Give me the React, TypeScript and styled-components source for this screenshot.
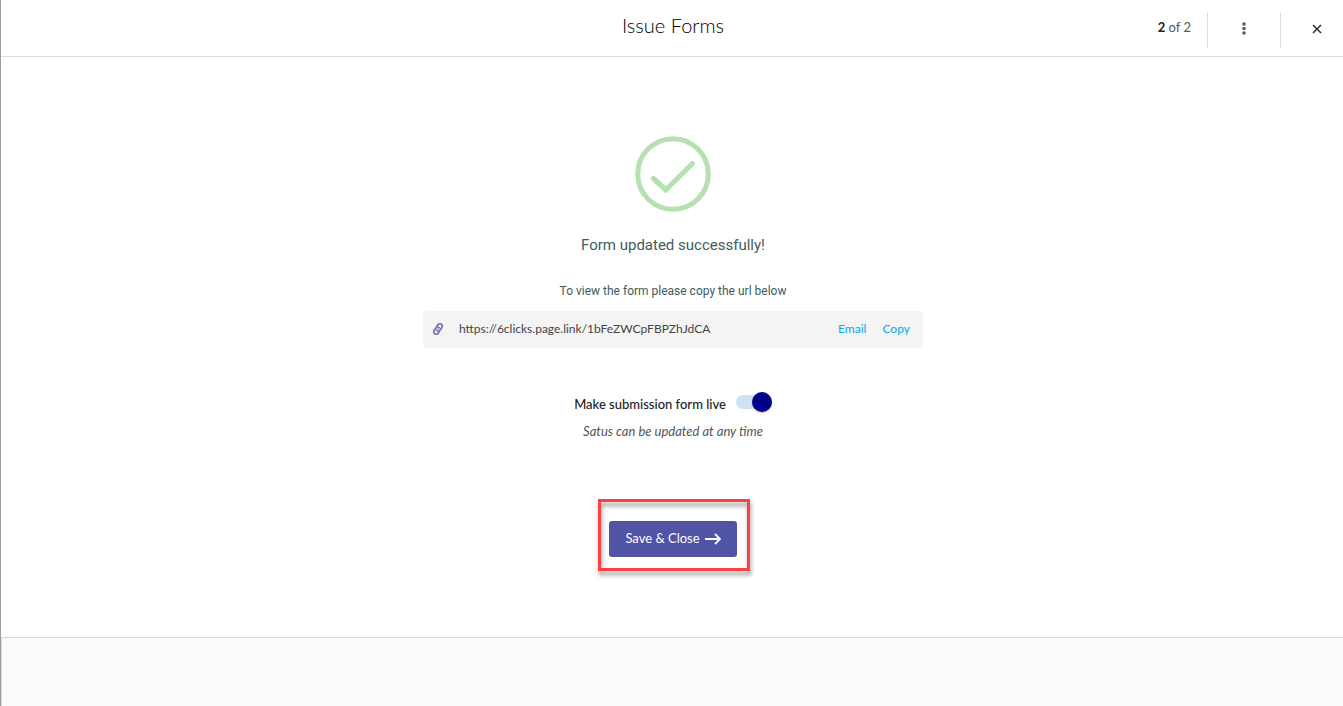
import React, { useState } from "react";
import styled, { createGlobalStyle } from "styled-components";

const GlobalStyle = createGlobalStyle`
  *, *::before, *::after { box-sizing: border-box; }
  body {
    margin: 0;
    background: #fff;
    color: #333;
    font-family: Lato, "Liberation Sans", sans-serif;
    font-size: 13px;
    line-height: 20px;
  }
  button { font: inherit; cursor: pointer; }
`;

const Page = styled.div`
  display: flex;
  flex-direction: column;
  min-height: 100vh;
  border-left: 1px solid #9c9ca2;
`;

const Header = styled.header`
  display: grid;
  grid-template-columns: 1fr auto 1fr;
  height: 57px;
  padding-left: 2px;
  border-bottom: 1px solid #dcdcdc;
`;

const Title = styled.h1`
  grid-column: 2;
  margin: 0;
  padding-top: 11px;
  font-size: 20px;
  line-height: 28px;
  font-weight: 300;
  color: #000;
`;

const HeaderTools = styled.div`
  display: flex;
  justify-content: flex-end;
  padding-top: 13px;
`;

const Step = styled.span`
  padding: 4px 16px 0 0;
  color: #555;

  strong { color: #222; }
`;

const IconButton = styled.button<{ $last?: boolean }>`
  display: flex;
  align-items: center;
  justify-content: center;
  width: ${(p) => (p.$last ? 63 : 73)}px;
  height: 35px;
  padding: 0 0 4px ${(p) => (p.$last ? 10 : 0)}px;
  border: 0;
  border-left: 1px solid #dcdcdc;
  background: none;
`;

const Main = styled.main`
  flex: 1;
  display: flex;
  flex-direction: column;
  align-items: center;
  padding: 79px 16px 64px 18px;
`;

const Message = styled.h2`
  margin: 23px 0 0;
  font: 400 15px/20px Roboto, sans-serif;
  color: #3f5b5b;
`;

const Hint = styled.p`
  margin: 26px 0 0;
  font: 400 12px/20px Roboto, sans-serif;
  color: #3f5b5b;
`;

const LinkBar = styled.div`
  display: flex;
  align-items: center;
  width: 100%;
  max-width: 500px;
  height: 37px;
  margin-top: 10px;
  padding: 0 13px 1px 9px;
  border-radius: 5px;
  background: #f4f4f4;
`;

const Url = styled.span`
  flex: 1;
  padding-left: 15px;
  font-size: 12px;
  color: #444;
`;

const LinkAction = styled.button`
  margin-left: 16px;
  padding: 0;
  border: 0;
  background: none;
  color: #16aeea;
  font-size: 12px;
  font-weight: 500;
`;

const LiveRow = styled.label`
  display: flex;
  align-items: center;
  gap: 10px;
  margin-top: 42px;
  font-weight: 500;
  color: #222;
`;

const LiveText = styled.span`
  padding-top: 4px;
`;

const Switch = styled.input`
  appearance: none;
  position: relative;
  display: flex;
  align-items: center;
  width: 36px;
  height: 20px;
  margin: 0;
  cursor: pointer;

  &::before {
    content: "";
    position: absolute;
    inset: 3px 0;
    border-radius: 7px;
    background: #cfe2f5;
  }
  &::after {
    content: "";
    position: relative;
    width: 20px;
    height: 20px;
    border-radius: 50%;
    background: #888;
    box-shadow: 0 1px 2px rgba(0, 0, 0, 0.25);
  }
  &:checked { justify-content: flex-end; }
  &:checked::after { background: #00008b; }
`;

const Note = styled.p`
  margin: 7px 0 0;
  font-style: italic;
  color: #555;
`;

const SaveArea = styled.div`
  position: relative;
  margin-top: 80px;
`;

const SaveButton = styled.button`
  display: flex;
  align-items: center;
  gap: 5px;
  height: 36px;
  padding: 0 16px 2px;
  border: 0;
  border-radius: 3px;
  background: #5053a6;
  color: #fff;

  svg { margin-top: 2px; }
`;

const Highlight = styled.div`
  position: absolute;
  inset: -22px -13px -14px -11px;
  border: 3px solid #fb4145;
  filter: drop-shadow(1px 4px 2px rgba(0, 0, 0, 0.4));
  pointer-events: none;
`;

const Footer = styled.footer`
  height: 69px;
  border-top: 1px solid #d8d7e2;
  border-left: 1px solid #d8d7e2;
  background: #fbfbfb;
`;

export default function App() {
  const [live, setLive] = useState(true);

  return (
    <Page>
      <GlobalStyle />
      <Header>
        <Title>Issue Forms</Title>
        <HeaderTools>
          <Step><strong>2</strong> of 2</Step>
          <IconButton aria-label="More options">
            <svg width="4" height="13" viewBox="0 0 4 13" fill="#5e5873">
              <circle cx="2" cy="2" r="1.8" />
              <circle cx="2" cy="6.5" r="1.8" />
              <circle cx="2" cy="11" r="1.8" />
            </svg>
          </IconButton>
          <IconButton $last aria-label="Close">
            <svg width="10" height="10" viewBox="0 0 10 10" stroke="#222" strokeWidth="1.4">
              <path d="M1 1l8 8M9 1L1 9" />
            </svg>
          </IconButton>
        </HeaderTools>
      </Header>
      <Main>
        <svg width="76" height="76" viewBox="0 0 76 76" fill="none" stroke="#b5e0af">
          <circle cx="38" cy="38" r="35.3" strokeWidth="5" />
          <path d="M18.5 42.5L30.7 54L57.5 27.5" strokeWidth="5.2" strokeLinecap="round" />
        </svg>
        <Message>Form updated successfully!</Message>
        <Hint>To view the form please copy the url below</Hint>
        <LinkBar>
          <svg width="12" height="12" viewBox="0 0 24 24" fill="none" stroke="#8478b8" strokeWidth="3.8" strokeLinecap="round">
            <g transform="rotate(-10 12 12)">
              <path d="M9.5 14a4.6 4.6 0 0 0 7 .2l3.4-3.6a4.8 4.8 0 0 0-6.8-6.8l-2.6 2.6" />
              <path d="M14.5 10a4.6 4.6 0 0 0-7-.2l-3.4 3.6a4.8 4.8 0 0 0 6.8 6.8l2.6-2.6" />
            </g>
          </svg>
          <Url>https://6clicks.page.link/1bFeZWCpFBPZhJdCA</Url>
          <LinkAction>Email</LinkAction>
          <LinkAction>Copy</LinkAction>
        </LinkBar>
        <LiveRow>
          <LiveText>Make submission form live</LiveText>
          <Switch type="checkbox" role="switch" checked={live} onChange={(e) => setLive(e.target.checked)} />
        </LiveRow>
        <Note>Satus can be updated at any time</Note>
        <SaveArea>
          <SaveButton>
            Save &amp; Close
            <svg width="16" height="12" viewBox="0 0 16 12" fill="none" stroke="#fff" strokeWidth="1.8">
              <path d="M0 6h14.5M10 1l5 5l-5 5" />
            </svg>
          </SaveButton>
          <Highlight />
        </SaveArea>
      </Main>
      <Footer />
    </Page>
  );
}
